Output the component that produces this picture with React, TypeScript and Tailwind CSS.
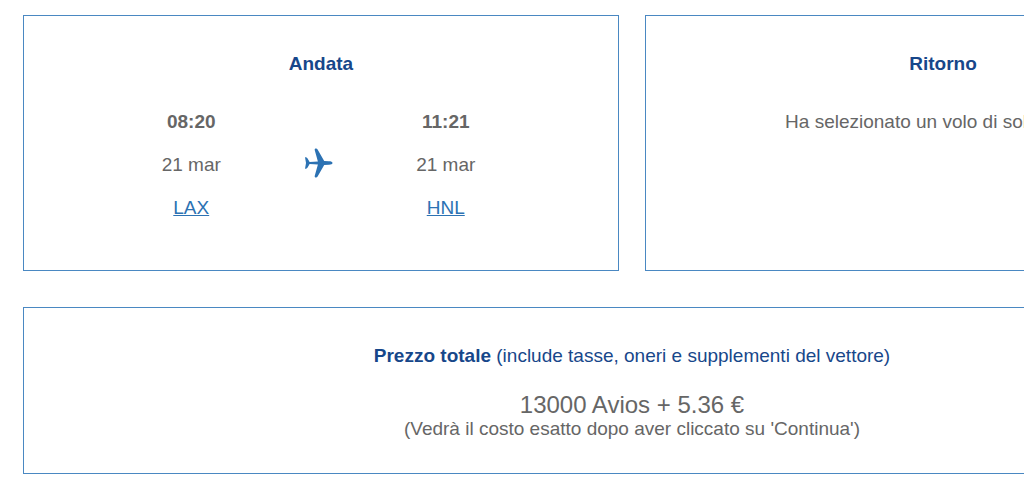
import type { ReactNode } from "react";

const STOPS = [
  { time: "08:20", date: "21 mar", airport: "LAX" },
  { time: "11:21", date: "21 mar", airport: "HNL" },
];

function PlaneIcon() {
  return (
    <svg viewBox="0 0 28 30" className="mb-1 h-[30px] w-7 fill-[#2c72b3]" aria-hidden="true">
      <path d="M27.500 15c0-1.100-1.500-1.700-3.500-1.700l-4.800-.3L12.600 1.500C12.200.8 11.700.5 11 .5c-1 0-1.500.6-1.300 1.500l3.200 11.400-8.300.5L2.600 10.600C2.100 9.800 1.200 9.300 0 9.300L1 15 0 20.700c1.200 0 2.100-.5 2.600-1.300l2-3.300 8.300.5L9.700 28c-.2.900.3 1.500 1.300 1.500.7 0 1.200-.3 1.600-1L19.200 17l4.800-.3c2 0 3.500-.6 3.500-1.700z" />
    </svg>
  );
}

function Stop({ time, date, airport }: (typeof STOPS)[number]) {
  return (
    <div className="flex flex-col items-center gap-[19px]">
      <p className="font-bold">{time}</p>
      <p>{date}</p>
      <a href="#" className="text-[#2c72b3] underline">
        {airport}
      </a>
    </div>
  );
}

function Card({ title, children }: { title: string; children: ReactNode }) {
  return (
    <section className="border border-[#4a88c2] pt-9 pb-[50px]">
      <h2 className="mb-[34px] font-bold text-[#17478a]">{title}</h2>
      {children}
    </section>
  );
}

export default function App() {
  return (
    <main className="overflow-hidden bg-white py-[15px] pl-[23px] font-['Liberation_Sans',Arial,sans-serif] text-[19px] leading-6 text-[#666]">
      <div className="min-w-[1218px] text-center">
        <div className="grid grid-cols-2 gap-[26px]">
          <Card title="Andata">
            <div className="grid grid-cols-[1fr_28px_1fr] items-center pr-[59px] pl-[54px]">
              <Stop {...STOPS[0]} />
              <PlaneIcon />
              <Stop {...STOPS[1]} />
            </div>
          </Card>
          <Card title="Ritorno">
            <p>Ha selezionato un volo di sola andata</p>
          </Card>
        </div>
        <section className="mt-9 border border-[#4a88c2] pt-9 pb-8">
          <h2 className="text-[#17478a]">
            <strong>Prezzo totale</strong> (include tasse, oneri e supplementi del vettore)
          </h2>
          <p className="mt-6 text-2xl leading-[25px]">13000 Avios + 5.36 €</p>
          <p>(Vedrà il costo esatto dopo aver cliccato su 'Continua')</p>
        </section>
      </div>
    </main>
  );
}
